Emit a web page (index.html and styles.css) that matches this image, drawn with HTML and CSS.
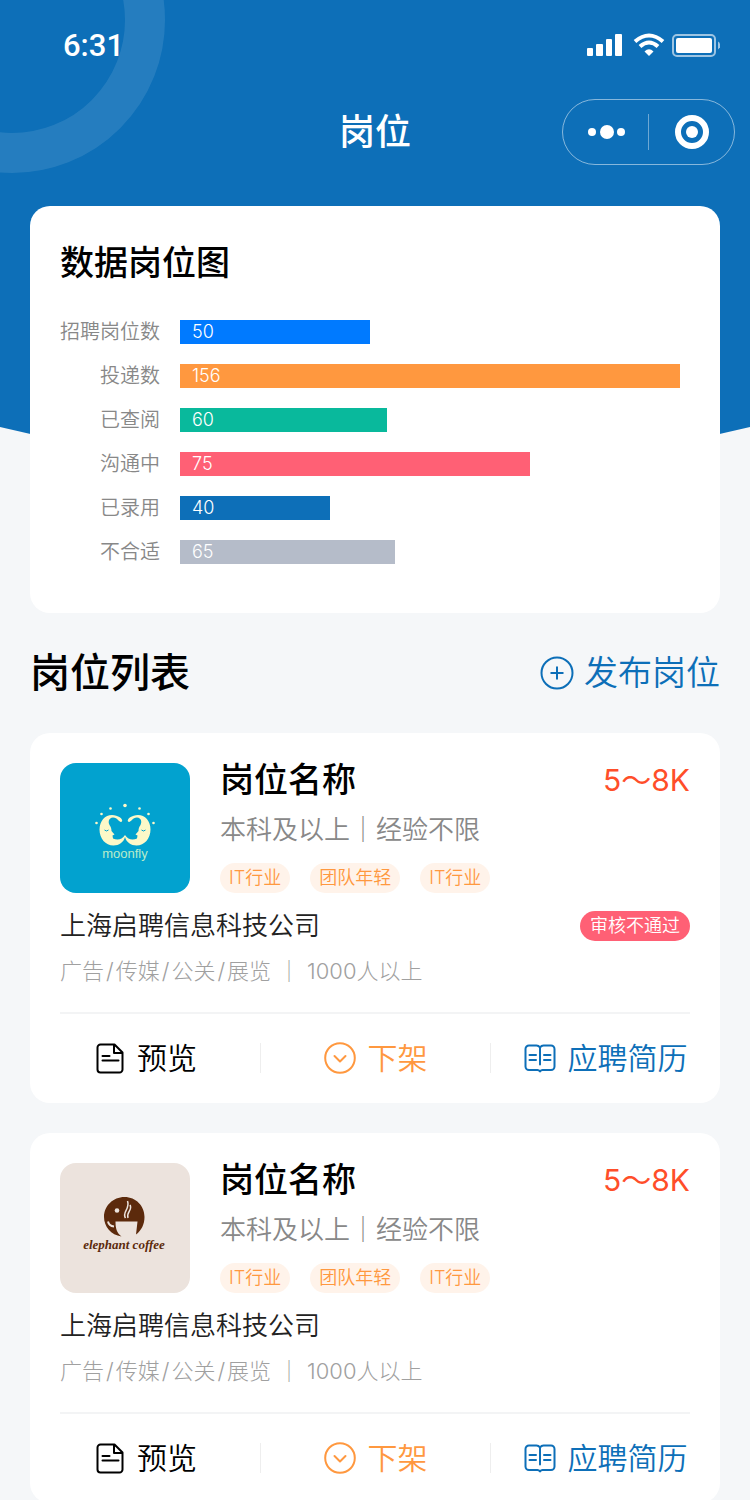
FILE: index.html
```html
<!DOCTYPE html>
<html lang="zh-CN">
<head>
    <meta charset="UTF-8">
    <meta name="viewport" content="width=device-width, initial-scale=1.0">
    <title>岗位</title>
    <link rel="stylesheet" href="styles.css">
</head>
<body>

    <!-- Shared icons -->
    <svg class="sprite" aria-hidden="true">
        <symbol id="icon-doc" viewBox="0 0 32 32">
            <path d="M21.500 2.500H7.500a3 3 0 0 0-3 3v22a3 3 0 0 0 3 3h19a3 3 0 0 0 3-3V10.500zM21 3v8h8M9.500 14h7M9.500 18.500h16" />
        </symbol>
        <symbol id="icon-down" viewBox="0 0 32 32">
            <circle cx="16" cy="16" r="14.800" />
            <path d="M10.500 14l5.500 5.500 5.500-5.500" />
        </symbol>
        <symbol id="icon-book" viewBox="0 0 32 32">
            <path d="M16 5.500C15 4 14 3.500 12.500 3.500H5a3.500 3.500 0 0 0-3.500 3.500v17.500A3.500 3.500 0 0 0 5 28h8.500c1.500 0 2.500 1.500 2.500 1.500s1-1.500 2.500-1.500H27a3.500 3.500 0 0 0 3.500-3.500V7A3.500 3.500 0 0 0 27 3.500h-7.500C18 3.500 17 4 16 5.500zM16 5.500v17M5.500 13h6.500M5.500 18h6.500M20 13h6.500M20 18h6.500" />
        </symbol>
    </svg>

    <div class="page">
        <!-- Blue background behind the header and chart -->
        <div class="hero-bg">
            <svg class="hero-shape" viewBox="0 0 750 472" preserveAspectRatio="none" aria-hidden="true">
                <path d="M0 0H750V427Q375 517 0 427Z" fill="#0d6fb8" />
            </svg>
            <div class="hero-ring"></div>
        </div>

        <header>
            <div class="status-bar">
                <span class="time">6:31</span>
                <svg class="status-icons" width="134" height="24" viewBox="0 0 134 24" fill="#fff" aria-hidden="true">
                    <rect x="1" y="15" width="6" height="8" rx="1" />
                    <rect x="10" y="11" width="7" height="12" rx="1" />
                    <rect x="20" y="6" width="6" height="17" rx="1" />
                    <rect x="29" y="1" width="7" height="22" rx="1" />
                    <g fill="none" stroke="#fff" stroke-width="4">
                        <path d="M49 8.500Q63 -3.500 77 8.500" />
                        <path d="M54 13.500Q63 5.500 72 13.500" />
                    </g>
                    <path d="M58.500 18.500Q63 14 67.500 18.500L63 23z" />
                    <rect x="87" y="2" width="42" height="21" rx="4" fill="none" stroke="#fff" stroke-opacity=".6" stroke-width="2" />
                    <rect x="90" y="5" width="36" height="15" rx="2" />
                    <path d="M132 8.500q5 4 0 8z" opacity=".6" />
                </svg>
            </div>
            <div class="nav-bar">
                <h1>岗位</h1>
                <div class="capsule">
                    <button class="capsule-btn" aria-label="更多">
                        <svg width="38" height="16" viewBox="0 0 38 16" fill="#fff">
                            <circle cx="5" cy="8" r="4" /><circle cx="20" cy="8" r="7" /><circle cx="34" cy="8" r="4" />
                        </svg>
                    </button>
                    <button class="capsule-btn" aria-label="关闭">
                        <svg width="34" height="34" viewBox="0 0 34 34">
                            <circle cx="17" cy="17" r="14" fill="none" stroke="#fff" stroke-width="6" />
                            <circle cx="17" cy="17" r="6" fill="#fff" />
                        </svg>
                    </button>
                </div>
            </div>
        </header>

        <main>
            <!-- Chart -->
            <section class="chart-card">
                <h2>数据岗位图</h2>
                <div class="chart">
                    <span class="label">招聘岗位数</span>
                    <div class="track"><div class="bar blue" style="width:38%">50</div></div>
                    <span class="label">投递数</span>
                    <div class="track"><div class="bar orange" style="width:100%">156</div></div>
                    <span class="label">已查阅</span>
                    <div class="track"><div class="bar green" style="width:41.4%">60</div></div>
                    <span class="label">沟通中</span>
                    <div class="track"><div class="bar pink" style="width:70%">75</div></div>
                    <span class="label">已录用</span>
                    <div class="track"><div class="bar navy" style="width:30%">40</div></div>
                    <span class="label">不合适</span>
                    <div class="track"><div class="bar grey" style="width:43%">65</div></div>
                </div>
            </section>

            <div class="list-header">
                <h2>岗位列表</h2>
                <button class="publish-btn">
                    <svg width="34" height="34" viewBox="0 0 34 34" fill="none" stroke="currentColor" stroke-width="2" aria-hidden="true">
                        <circle cx="17" cy="17" r="15.500" />
                        <path d="M10.500 17h13M17 10.500v13" />
                    </svg>
                    发布岗位
                </button>
            </div>

            <!-- Job list -->
            <div class="job-list">
                <article class="job-card">
                    <div class="job-top">
                        <svg class="logo" viewBox="0 0 130 130" role="img" aria-label="moonfly">
                            <rect width="130" height="130" fill="#02a2cf" />
                            <g fill="#fdf8c8">
                                <path d="M62 58.500C63.500 56 58 52 52 52C45 52 39.500 58 39.500 66.500C39.500 75.500 45.500 82.500 53.500 82.500C59 82.500 63.500 79.500 65 74C66.500 79.500 71 82.500 76.500 82.500C84.500 82.500 90.500 75.500 90.500 66.500C90.500 58 85 52 78 52C72 52 66.500 56 68 58.500C70.500 60.500 71.500 55 77 54.500C81.500 55 82 59 80.500 62C79 64 78.500 66 78.500 68L75.500 71.500L77.500 72.500L77 75.500C73 77.500 68 77 65 72C62 77 57 77.500 53 75.500L52.500 72.500L54.500 71.500L51.500 68C51.500 66 51 64 49.500 62C48 59 48.500 55 53 54.500C58.500 55 59.500 60.500 62 58.500Z" />
                                <circle cx="65" cy="42.500" r="1.800" />
                                <circle cx="50.500" cy="45.500" r="1.300" /><circle cx="79.500" cy="45.500" r="1.300" />
                                <circle cx="41.500" cy="51" r="1.300" /><circle cx="88.500" cy="51" r="1.300" />
                                <circle cx="36.500" cy="60" r="1.300" /><circle cx="93.500" cy="60" r="1.300" />
                            </g>
                            <path d="M44.500 67q2 2 4 0M81.500 67q2 2 4 0" fill="none" stroke="#02a2cf" />
                            <text class="moon-text" x="65" y="95" text-anchor="middle">moonfly</text>
                        </svg>
                        <div class="job-info">
                            <div class="title-row">
                                <h3>岗位名称</h3>
                                <span class="salary">5～8K</span>
                            </div>
                            <p class="require">本科及以上｜经验不限</p>
                            <div class="tags">
                                <span class="tag">IT行业</span>
                                <span class="tag">团队年轻</span>
                                <span class="tag">IT行业</span>
                            </div>
                        </div>
                    </div>
                    <div class="company-row">
                        <p class="company">上海启聘信息科技公司</p>
                        <span class="badge">审核不通过</span>
                    </div>
                    <p class="meta"><span>广告<i>/</i>传媒<i>/</i>公关<i>/</i>展览</span><span>｜</span><span>1000人以上</span></p>
                    <div class="actions">
                        <button class="action"><svg><use href="#icon-doc" /></svg>预览</button>
                        <button class="action off"><svg><use href="#icon-down" /></svg>下架</button>
                        <button class="action resume"><svg><use href="#icon-book" /></svg>应聘简历</button>
                    </div>
                </article>

                <article class="job-card">
                    <div class="job-top">
                        <svg class="logo" viewBox="0 0 130 130" role="img" aria-label="elephant coffee">
                            <rect width="130" height="130" fill="#ece3dd" />
                            <path d="M61.500 73.500C51 72 44 63.500 44 54C44 43 53 34 64.500 34C76 34 84.500 43 84.500 54C84.500 61 81.500 67.500 76 71.500L77.500 58.500H55.500C55.500 65 56.500 69.500 61.500 73.500Z" fill="#5c2a0c" />
                            <circle cx="57" cy="47.500" r="2.300" fill="#ece3dd" />
                            <path d="M48 58.500q1 4.500 6 5" fill="none" stroke="#ece3dd" stroke-width="2" />
                            <path d="M65.500 55c-4-6 5-9 2-17M68 55c-2-6 5-8 2-13" fill="none" stroke="#ece3dd" stroke-width="1.500" />
                            <text class="coffee-text" x="64" y="86" text-anchor="middle">elephant coffee</text>
                        </svg>
                        <div class="job-info">
                            <div class="title-row">
                                <h3>岗位名称</h3>
                                <span class="salary">5～8K</span>
                            </div>
                            <p class="require">本科及以上｜经验不限</p>
                            <div class="tags">
                                <span class="tag">IT行业</span>
                                <span class="tag">团队年轻</span>
                                <span class="tag">IT行业</span>
                            </div>
                        </div>
                    </div>
                    <div class="company-row">
                        <p class="company">上海启聘信息科技公司</p>
                    </div>
                    <p class="meta"><span>广告<i>/</i>传媒<i>/</i>公关<i>/</i>展览</span><span>｜</span><span>1000人以上</span></p>
                    <div class="actions">
                        <button class="action"><svg><use href="#icon-doc" /></svg>预览</button>
                        <button class="action off"><svg><use href="#icon-down" /></svg>下架</button>
                        <button class="action resume"><svg><use href="#icon-book" /></svg>应聘简历</button>
                    </div>
                </article>
            </div>
        </main>
    </div>

</body>
</html>
```

FILE: styles.css
```css
* {
    box-sizing: border-box;
}

body {
    margin: 0;
    background-color: #f5f7f9;
    font-family: Inter, "Noto Sans CJK SC", sans-serif;
    font-weight: 350;
    color: #000;
}

h1, h2, h3, p {
    margin: 0;
    font-weight: 500;
}

button {
    padding: 0;
    border: none;
    background: none;
    font: inherit;
    color: inherit;
    cursor: pointer;
}

.sprite {
    display: none;
}

.page {
    position: relative;
}

/* Hero background */
.hero-bg {
    position: absolute;
    top: 0;
    left: 0;
    right: 0;
    height: 472px;
    overflow: hidden;
    z-index: -1;
}

.hero-shape {
    display: block;
    width: 100%;
    height: 100%;
}

.hero-ring {
    position: absolute;
    top: -133px;
    left: -141px;
    width: 306px;
    height: 306px;
    border: 40px solid rgba(255, 255, 255, 0.1);
    border-radius: 50%;
}

/* Status bar */
.status-bar {
    display: flex;
    justify-content: space-between;
    align-items: center;
    height: 90px;
    padding: 0 30px 0 63px;
}

.time {
    font-family: Roboto, sans-serif;
    font-size: 31px;
    font-weight: 500;
    color: #fff;
}

/* Navigation */
.nav-bar {
    display: grid;
    grid-template-columns: 1fr auto 1fr;
    align-items: center;
    height: 84px;
    padding: 0 15px;
}

.nav-bar h1 {
    grid-column: 2;
    font-size: 36px;
    line-height: 40px;
    color: #fff;
}

.capsule {
    justify-self: end;
    display: flex;
    align-items: center;
    width: 173px;
    height: 66px;
    border: 1px solid rgba(255, 255, 255, 0.5);
    border-radius: 33px;
}

.capsule-btn {
    display: flex;
    flex: 1;
    justify-content: center;
    align-items: center;
    height: 36px;
}

.capsule-btn + .capsule-btn {
    border-left: 1px solid rgba(255, 255, 255, 0.4);
}

/* Chart card */
main {
    padding: 32px 30px 0;
}

.chart-card {
    padding: 32px 30px 49px;
    background-color: #fff;
    border-radius: 20px;
}

.chart-card h2 {
    margin-bottom: 32px;
    font-size: 34px;
    line-height: 50px;
}

.chart {
    display: grid;
    grid-template-columns: auto 1fr;
    gap: 20px;
    padding-right: 10px;
}

.label {
    font-size: 20px;
    line-height: 24px;
    text-align: right;
    color: #888;
}

.bar {
    padding-left: 12px;
    font-size: 18px;
    line-height: 24px;
    color: #fff;
}

.blue { background-color: #007aff; }
.orange { background-color: #ff983f; }
.green { background-color: #09b99c; }
.pink { background-color: #ff6075; }
.navy { background-color: #0d6fb8; }
.grey { background-color: #b5bcc9; }

/* List header */
.list-header {
    display: flex;
    justify-content: space-between;
    align-items: center;
    padding: 30px 0;
    line-height: 60px;
}

.list-header h2 {
    font-size: 40px;
}

.publish-btn {
    display: flex;
    align-items: center;
    gap: 10px;
    font-size: 34px;
    color: #0d6fb8;
}

/* Job cards */
.job-list {
    display: flex;
    flex-direction: column;
    gap: 30px;
}

.job-card {
    background-color: #fff;
    border-radius: 20px;
}

.job-top {
    display: flex;
    gap: 30px;
    padding: 30px 30px 16px;
}

.logo {
    width: 130px;
    height: 130px;
    border-radius: 16px;
}

.moon-text {
    font-family: "Liberation Sans", sans-serif;
    font-size: 13px;
    font-weight: 400;
    fill: #b9ecc9;
}

.coffee-text {
    font-family: "Liberation Serif", serif;
    font-size: 13px;
    font-style: italic;
    font-weight: 700;
    fill: #5c2a0c;
}

.job-info {
    display: flex;
    flex: 1;
    flex-direction: column;
    gap: 16px;
}

.title-row {
    display: flex;
    justify-content: space-between;
    line-height: 34px;
}

.title-row h3 {
    font-size: 34px;
}

.salary {
    font-size: 30px;
    font-weight: 400;
    color: #ff4e29;
}

.require {
    font-size: 26px;
    font-weight: 350;
    line-height: 34px;
    color: #888;
}

.tags {
    display: flex;
    gap: 20px;
}

.tag,
.badge {
    padding: 0 9px;
    border-radius: 15px;
    font-size: 18px;
    line-height: 30px;
}

.tag {
    background-color: #fff3ea;
    color: #ff983f;
}

.badge {
    padding: 0 10px;
    background-color: #ff6075;
    color: #fff;
}

.company-row {
    display: flex;
    justify-content: space-between;
    align-items: center;
    padding: 0 30px;
}

.company {
    font-size: 26px;
    font-weight: 350;
    line-height: 34px;
    color: #222;
}

.meta {
    display: flex;
    gap: 7px;
    margin: 16px 30px 0;
    padding-bottom: 29px;
    border-bottom: 2px solid #f3f4f5;
    font-size: 22px;
    font-weight: 300;
    line-height: 24px;
    color: #a0a0a0;
}

.meta i {
    margin: 0 2px;
    font-style: normal;
}

/* Card actions */
.actions {
    display: grid;
    grid-template-columns: repeat(3, 1fr);
    padding: 29px 0 30px;
}

.action {
    display: flex;
    justify-content: center;
    align-items: center;
    gap: 12px;
    height: 30px;
    font-size: 30px;
    line-height: 30px;
}

.action + .action {
    border-left: 1px solid #eee;
}

.action svg {
    width: 32px;
    height: 32px;
    fill: none;
    stroke: currentColor;
    stroke-width: 2;
    stroke-linejoin: round;
    stroke-linecap: round;
}

.off {
    color: #ff983f;
}

.resume {
    color: #0d6fb8;
}
```
